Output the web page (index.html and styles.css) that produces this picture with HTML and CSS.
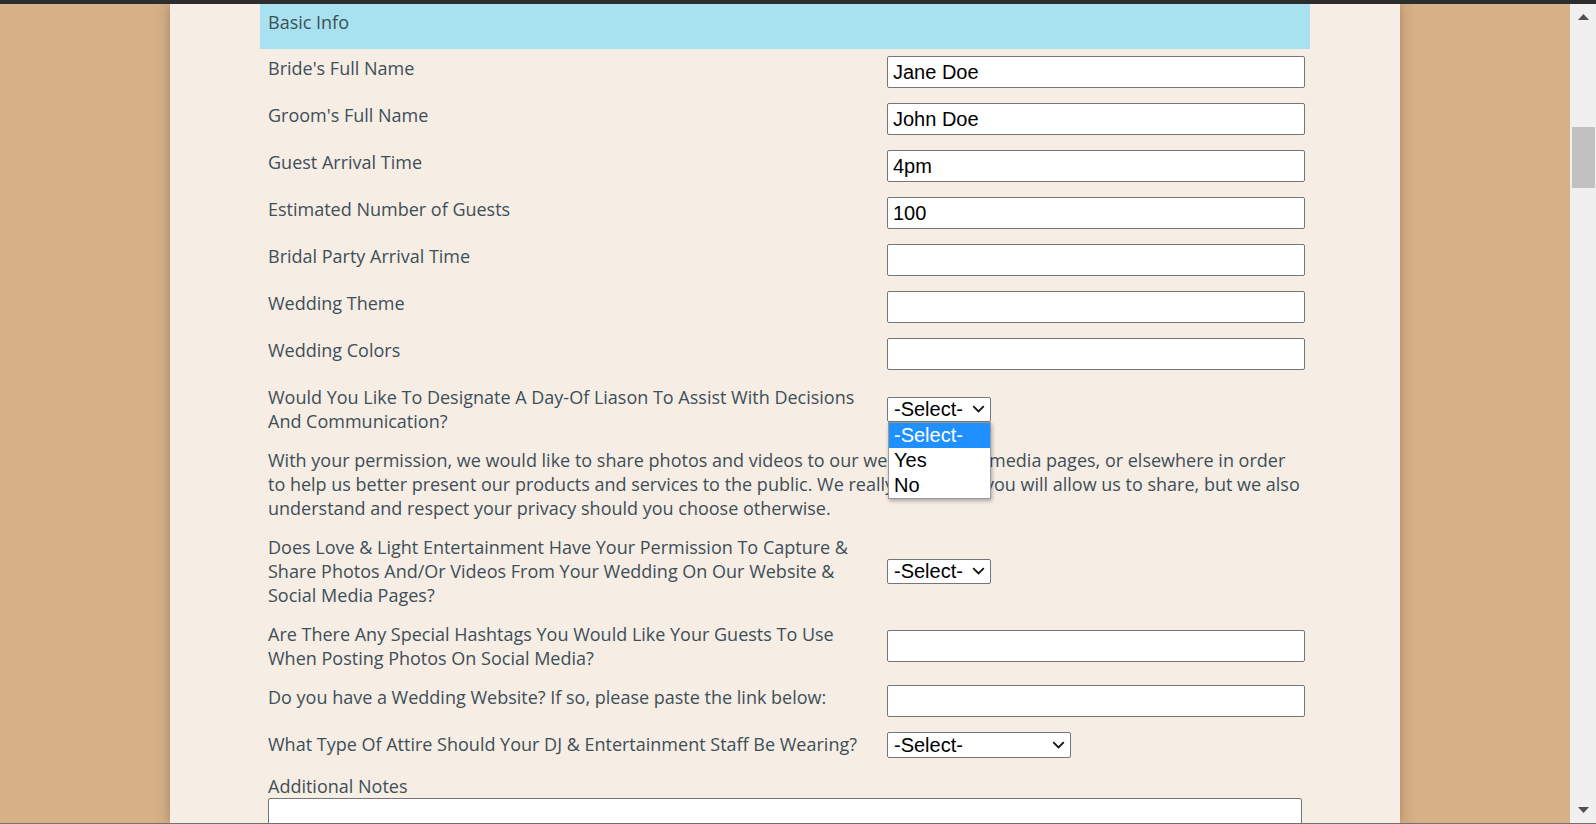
FILE: index.html
```
<!DOCTYPE html>
<html lang="en">
<head>
<meta charset="utf-8">
<title>Wedding Planning Form</title>
<link rel="stylesheet" href="styles.css">
</head>
<body>
<div class="topbar"></div>
<div class="screen">
  <div class="page">
    <div class="panel">
      <div class="form">
        <div class="section-head">Basic Info</div>
        <div class="rows">
          <div class="row">
            <label class="lbl">Bride's Full Name</label>
            <div class="field"><input class="txt" type="text" value="Jane Doe"></div>
          </div>
          <div class="row">
            <label class="lbl">Groom's Full Name</label>
            <div class="field"><input class="txt" type="text" value="John Doe"></div>
          </div>
          <div class="row">
            <label class="lbl">Guest Arrival Time</label>
            <div class="field"><input class="txt" type="text" value="4pm"></div>
          </div>
          <div class="row">
            <label class="lbl">Estimated Number of Guests</label>
            <div class="field"><input class="txt" type="text" value="100"></div>
          </div>
          <div class="row">
            <label class="lbl">Bridal Party Arrival Time</label>
            <div class="field"><input class="txt" type="text" value=""></div>
          </div>
          <div class="row">
            <label class="lbl">Wedding Theme</label>
            <div class="field"><input class="txt" type="text" value=""></div>
          </div>
          <div class="row">
            <label class="lbl">Wedding Colors</label>
            <div class="field"><input class="txt" type="text" value=""></div>
          </div>
          <div class="row">
            <label class="lbl">Would You Like To Designate A Day-Of Liason To Assist With Decisions And Communication?</label>
            <div class="field">
              <div class="select-wrap">
                <select class="sel sel-short"><option>-Select-</option><option>Yes</option><option>No</option></select>
                <svg class="chev" width="13" height="8" viewBox="0 0 13 8"><polyline points="1.2,1.2 6.5,6.4 11.8,1.2" fill="none" stroke="#111" stroke-width="1.8"/></svg>
                <ul class="popup">
                  <li class="opt opt-active">-Select-</li>
                  <li class="opt">Yes</li>
                  <li class="opt">No</li>
                </ul>
              </div>
            </div>
          </div>
          <div class="row">
            <p class="note">With your permission, we would like to share photos and videos to our website, social media pages, or elsewhere in order to help us better present our products and services to the public. We really hope that you will allow us to share, but we also understand and respect your privacy should you choose otherwise.</p>
          </div>
          <div class="row">
            <label class="lbl">Does Love &amp; Light Entertainment Have Your Permission To Capture &amp; Share Photos And/Or Videos From Your Wedding On Our Website &amp; Social Media Pages?</label>
            <div class="field">
              <div class="select-wrap">
                <select class="sel sel-short"><option>-Select-</option><option>Yes</option><option>No</option></select>
                <svg class="chev" width="13" height="8" viewBox="0 0 13 8"><polyline points="1.2,1.2 6.5,6.4 11.8,1.2" fill="none" stroke="#111" stroke-width="1.8"/></svg>
              </div>
            </div>
          </div>
          <div class="row">
            <label class="lbl">Are There Any Special Hashtags You Would Like Your Guests To Use When Posting Photos On Social Media?</label>
            <div class="field"><input class="txt" type="text" value=""></div>
          </div>
          <div class="row">
            <label class="lbl">Do you have a Wedding Website? If so, please paste the link below:</label>
            <div class="field"><input class="txt" type="text" value=""></div>
          </div>
          <div class="row">
            <label class="lbl">What Type Of Attire Should Your DJ &amp; Entertainment Staff Be Wearing?</label>
            <div class="field">
              <div class="select-wrap">
                <select class="sel sel-long"><option>-Select-</option></select>
                <svg class="chev" width="13" height="8" viewBox="0 0 13 8"><polyline points="1.2,1.2 6.5,6.4 11.8,1.2" fill="none" stroke="#111" stroke-width="1.8"/></svg>
              </div>
            </div>
          </div>
          <div class="row row-stack">
            <label class="lbl-plain">Additional Notes</label>
            <textarea class="notes"></textarea>
          </div>
        </div>
      </div>
    </div>
  </div>
  <div class="scrollbar">
    <div class="sb-btn"><svg width="11" height="6" viewBox="0 0 11 6"><polygon points="0,6 5.5,0 11,6" fill="#505050"/></svg></div>
    <div class="sb-track"><div class="sb-thumb"></div></div>
    <div class="sb-btn"><svg width="11" height="6" viewBox="0 0 11 6"><polygon points="0,0 11,0 5.5,6" fill="#505050"/></svg></div>
  </div>
</div>
<div class="bottomline"></div>
</body>
</html>
```
FILE: styles.css
```
html, body {
  margin: 0;
  padding: 0;
}
body {
  width: 1596px;
  height: 824px;
  overflow: hidden;
  background: #d6b087;
  font-family: "Open Sans", "Noto Sans", sans-serif;
  color: #3e4f58;
}
.topbar {
  height: 4px;
  background: #2d2d2d;
}
.screen {
  display: flex;
  height: 819px;
}
.page {
  flex: 1;
  display: flex;
  justify-content: center;
  overflow: hidden;
}
.panel {
  width: 1230px;
  height: 100%;
  background: #f6ede4;
  box-shadow: 0 0 12px rgba(60, 40, 20, 0.35);
}
.form {
  width: 1050px;
  margin: 0 auto;
}
.section-head {
  height: 45px;
  box-sizing: border-box;
  padding: 6px 8px 0;
  background: #a8e2f0;
  font-size: 18px;
  line-height: 24px;
}
.rows {
  display: flex;
  flex-direction: column;
  gap: 15px;
  padding-top: 7px;
}
.row {
  display: flex;
  align-items: center;
}
.lbl {
  width: 603px;
  padding: 0 8px;
  align-self: flex-start;
  font-size: 18px;
  line-height: 24px;
}
.field {
  padding-left: 8px;
}
.txt {
  display: block;
  width: 418px;
  height: 32px;
  box-sizing: border-box;
  margin: 0;
  border: 1px solid #767676;
  border-radius: 2px;
  padding: 0 5px;
  background: #fff;
  font-family: "Liberation Sans", Arial, sans-serif;
  font-size: 20px;
  color: #000;
}
.select-wrap {
  position: relative;
  display: inline-block;
  vertical-align: top;
}
.sel {
  display: block;
  -webkit-appearance: none;
  appearance: none;
  margin: 0;
  height: 25px;
  box-sizing: border-box;
  border: 1px solid #767676;
  border-radius: 2px;
  padding: 0 0 0 6px;
  background: #fff;
  font-family: "Liberation Sans", Arial, sans-serif;
  font-size: 20px;
  line-height: 23px;
  color: #000;
}
.sel-short {
  width: 104px;
}
.sel-long {
  width: 184px;
  height: 26px;
}
.chev {
  position: absolute;
  right: 6px;
  top: 50%;
  margin-top: -4px;
  pointer-events: none;
}
.popup {
  position: absolute;
  top: 100%;
  left: 1px;
  width: 103px;
  box-sizing: border-box;
  margin: 0;
  padding: 0;
  list-style: none;
  background: #fff;
  border: 1px solid #9a9a9a;
  box-shadow: 1px 2px 4px rgba(0, 0, 0, 0.3);
  z-index: 5;
}
.opt {
  height: 25px;
  line-height: 25px;
  padding-left: 5px;
  font-family: "Liberation Sans", Arial, sans-serif;
  font-size: 20px;
  color: #000;
}
.opt-active {
  background: #1e90ff;
  color: #fff;
}
.note {
  margin: 0;
  padding: 0 8px;
  font-size: 18px;
  line-height: 24px;
}
.row-stack {
  flex-direction: column;
  align-items: stretch;
  padding: 1px 8px 0;
}
.lbl-plain {
  font-size: 18px;
  line-height: 24px;
}
.notes {
  display: block;
  width: 1034px;
  height: 120px;
  box-sizing: border-box;
  margin: 0;
  border: 1px solid #767676;
  border-radius: 2px;
  background: #fff;
  resize: none;
}
.scrollbar {
  width: 26px;
  background: #f0f0f0;
  display: flex;
  flex-direction: column;
}
.sb-btn {
  height: 26px;
  display: flex;
  align-items: center;
  justify-content: center;
}
.sb-track {
  flex: 1;
  padding: 97px 1px 0 2px;
}
.sb-thumb {
  height: 61px;
  background: #c1c1c1;
}
.bottomline {
  height: 1px;
  background: #707070;
}
```
